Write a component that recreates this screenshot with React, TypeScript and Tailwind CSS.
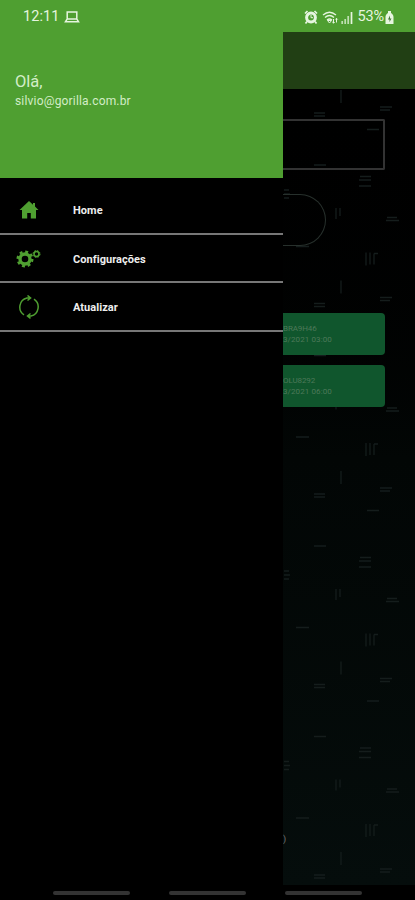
import type { ReactNode } from "react";

const font = "font-['Roboto','Liberation_Sans',sans-serif]";

const cards = [
  { plate: "BRA9H46", date: "3/2021 03:00" },
  { plate: "OLU8292", date: "3/2021 06:00" },
];

// strokes of one background tile, which repeats every 190.5px
const tilePath =
  "M296 56h13M366 62v13M370 62v12M374 63v11M378 63h-4M341 90v13M380 107h12M380 110h10M314 113h11M314 116h11M367 129.500h12M314 165h12M360 176.500h11M359 180h12M359 186h12M284 190h5M284 194h6M284 198h5M336 208v11M340 208v8M387 217.500h10M386 220.500h13";

const tiles = [0, 190.5, 381, 571.5, 762];

function HomeIcon() {
  return (
    <svg viewBox="0 0 20 18" className="mb-0.5 h-[18px] w-5" fill="#4f9f31">
      <path d="M10 0 .5 9h2.500V17.500h5.200V12h3.600v5.500H17V9h2.500L16 5.600V2h-2v1.700z" />
    </svg>
  );
}

function GearsIcon() {
  return (
    <svg viewBox="0 0 26 20" className="mb-0.5 h-5 w-[26px]" fill="none" stroke="#4f9f31">
      <circle cx="9" cy="11" r="5" strokeWidth="3.400" />
      <circle cx="9" cy="11" r="7.300" strokeWidth="2.400" strokeDasharray="2.900 2.833" />
      <circle cx="20.500" cy="6" r="2.500" strokeWidth="1.500" />
      <circle cx="20.500" cy="6" r="3.500" strokeWidth="1" strokeDasharray="1.600 1.149" />
    </svg>
  );
}

function RefreshIcon() {
  return (
    <svg viewBox="0 0 22 24" className="mb-px h-6 w-[22px]" fill="none" stroke="#4f9f31" strokeWidth="1.500">
      <path d="M6 19.800A9.300 9.300 0 0 1 9 3h3.500M9.500.500 12.600 3 9.500 5.500M16 4.200A9.300 9.300 0 0 1 13 21H9.500M12.500 18.500 9.500 21l3 2.400" />
    </svg>
  );
}

function MenuItem({ icon, label }: { icon: ReactNode; label: string }) {
  return (
    <div className="flex h-[48.5px] items-center border-b-2 border-[#777] pt-[3px] pl-4">
      <span className="flex w-[57px] items-center">{icon}</span>
      <span className="pt-px text-[11px] font-bold tracking-[0.05px] text-[#eee]">{label}</span>
    </div>
  );
}

function StatusBar() {
  return (
    <header className="flex h-8 items-center bg-[#4f9f31] pt-0.5 pl-[23px] text-[#e6f5df]">
      <span className="w-[41px] text-[14.500px] tracking-[0.05px]">12:11</span>
      <svg viewBox="0 0 16 12" className="h-3 w-4" fill="none" stroke="currentColor" strokeWidth="1.500">
        <path d="M3.200 1h9.600v7H3.200zM1.500 10.700l1.700-2.700h9.600l1.700 2.700z" />
      </svg>
      <div className="ml-auto flex items-center pr-[21px]">
        <svg viewBox="0 0 14 14" className="mr-1 size-[14px]" fill="none" stroke="currentColor">
          <circle cx="7" cy="7.500" r="4.400" strokeWidth="3" />
          <path d="M1 3.500 3.500 1M13 3.500 10.500 1M3 11.500l-1.500 2M11 11.500l1.500 2" strokeWidth="1.700" />
          <path d="M7 5v2.700h2" strokeWidth="1" />
        </svg>
        <svg viewBox="0 0 17 13" className="mr-0.5 h-[13px] w-[17px]" fill="none" stroke="currentColor" strokeWidth="1.300">
          <path d="M1 4Q7.500-1.500 14 4M3 6.500q4.500-4 9 0M5 9q2.500-2 5 0" />
          <path d="m7.500 12-2-2.500h4zM11.500 8v4M14.500 7.500v4M10.300 11l1.200 1.200L12.700 11M13.300 8.500l1.200-1.200 1.200 1.200" strokeWidth="1" />
        </svg>
        <svg viewBox="0 0 12 13" className="mr-1 h-[13px] w-3" stroke="currentColor" strokeWidth="1.700">
          <path d="M1.200 13v-3M4.200 13V8M7.200 13V5" opacity=".75" />
          <path d="M10.500 13V1" />
        </svg>
        <span className="text-[14.500px] tracking-[-0.1px]">53%</span>
        <svg viewBox="0 0 9 13" className="ml-px h-[13px] w-[9px]">
          <path fill="currentColor" d="M3 0h3v2c1.500 1 2.500 2 2.500 4v7h-8V6c0-2 1-3 2.500-4z" />
          <path fill="#417536" d="M5 4.500 3 8.500h1.500V11L6.500 7.500H5z" />
        </svg>
      </div>
    </header>
  );
}

function Backdrop() {
  return (
    <main className="relative h-[853px] flex-1 overflow-hidden bg-linear-to-b from-black via-[#020605] via-50% to-[#050d0c]">
      <svg className="absolute inset-0 h-full w-full" viewBox="283 32 132 853" fill="none">
        {tiles.map((y) => (
          <path key={y} d={tilePath} transform={`translate(0 ${y})`} stroke="#151d1c" strokeWidth="1.300" />
        ))}
      </svg>
      <div className="relative">
        <div className="h-[57px] bg-[#213f14]" />
        <div className="mt-[30px] h-[51px] w-[102px] rounded-r-[2px] border-2 border-l-0 border-[#333]" />
        <div className="mt-6 h-[52px] w-[43px] rounded-r-full border border-l-0 border-[#27302c]" />
        <div className="mt-[66.5px] flex flex-col gap-[10px]">
          {cards.map((card) => (
            <div
              key={card.plate}
              className="flex h-[42px] w-[102px] flex-col items-start justify-center rounded-r-[4px] bg-[#10562d] text-[8px] leading-[11px] whitespace-nowrap text-[#4d7959]"
            >
              <span className="tracking-[-0.1px]">{card.plate}</span>
              <span className="tracking-[0.1px]">{card.date}</span>
            </div>
          ))}
        </div>
        <div className="mt-[426px] text-[9px] leading-3 text-[#777]">)</div>
      </div>
    </main>
  );
}

export default function App() {
  return (
    <div className={`flex h-[900px] w-[415px] flex-col overflow-hidden bg-black ${font}`}>
      <StatusBar />
      <div className="flex h-[853px]">
        <aside className="w-[283px] bg-black">
          <div className="h-[146px] bg-[#4f9f31] pt-10 pl-[15px] text-[#d3edc7]">
            <p className="text-[16.500px] leading-5">Olá,</p>
            <p className="pt-px text-[12px] leading-[17px] tracking-[0.18px]">silvio@gorilla.com.br</p>
          </div>
          <nav className="pt-2">
            <MenuItem icon={<span className="pl-[3px]"><HomeIcon /></span>} label="Home" />
            <MenuItem icon={<GearsIcon />} label="Configurações" />
            <MenuItem icon={<span className="pl-[2px]"><RefreshIcon /></span>} label="Atualizar" />
          </nav>
        </aside>
        <Backdrop />
      </div>
      <footer className="flex gap-[39px] pt-[6px] pl-[53px]">
        <div className="h-1 w-[77px] rounded-full bg-[#333]" />
        <div className="h-1 w-[77px] rounded-full bg-[#333]" />
        <div className="h-1 w-[77px] rounded-full bg-[#333]" />
      </footer>
    </div>
  );
}
